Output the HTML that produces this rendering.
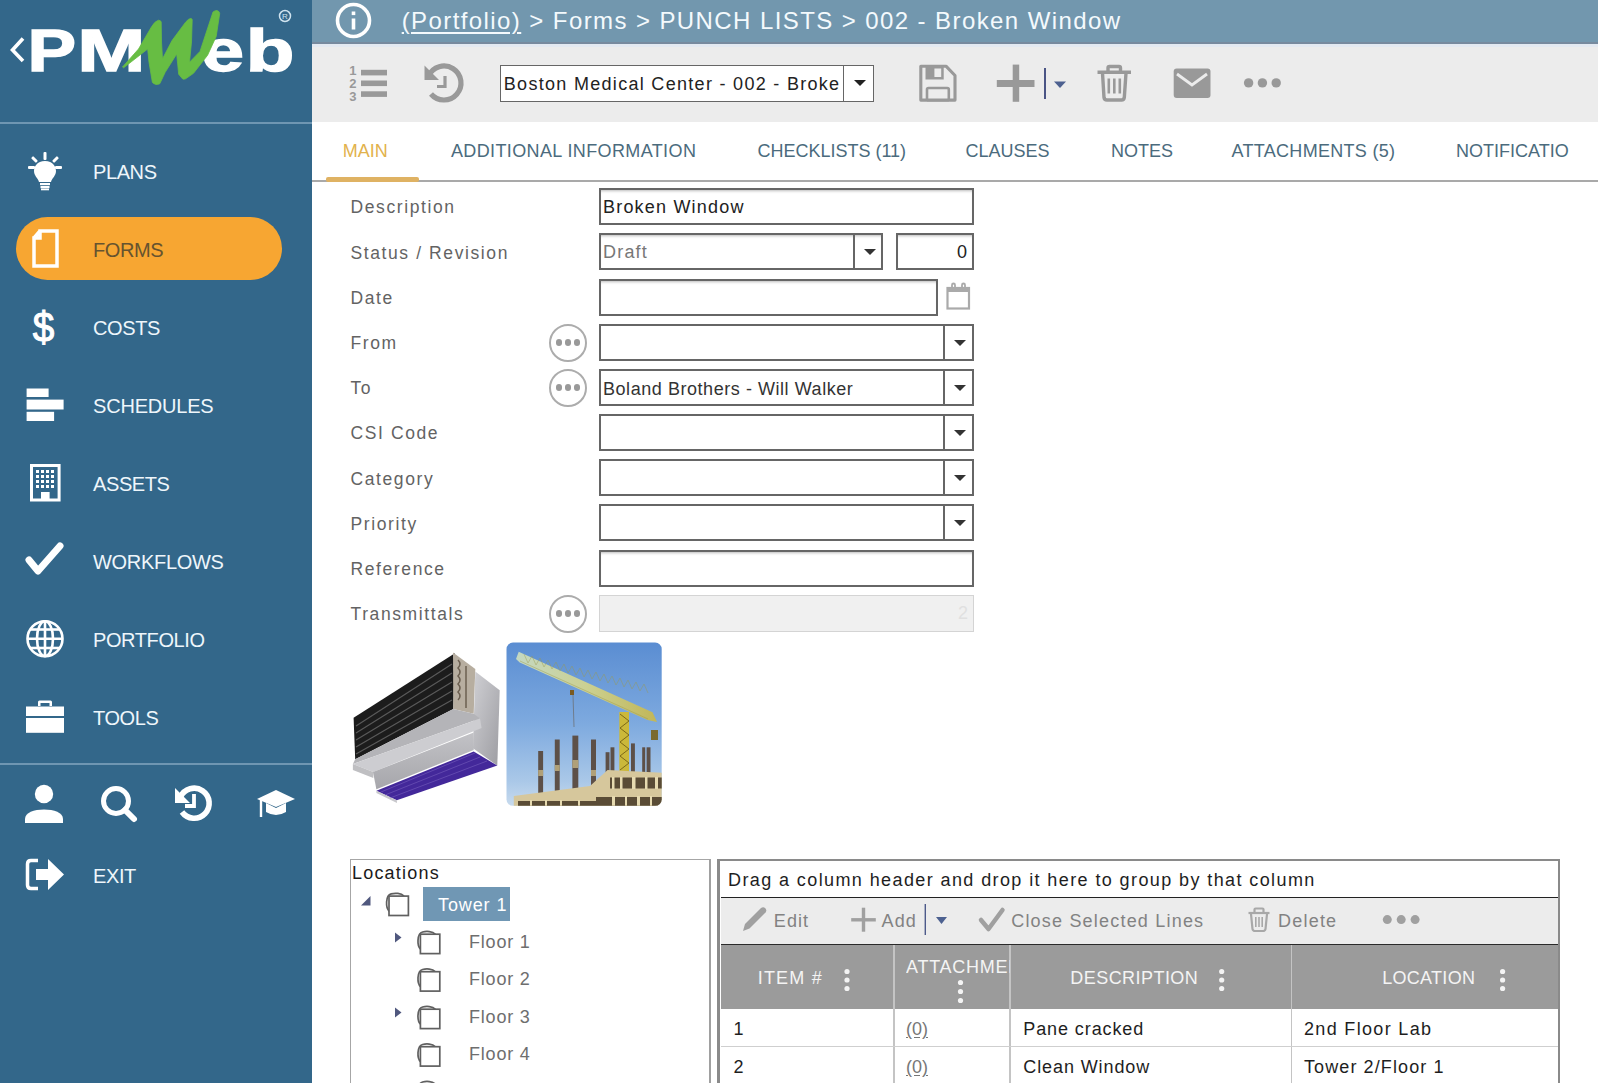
<!DOCTYPE html>
<html><head><meta charset="utf-8">
<style>
*{box-sizing:border-box;margin:0;padding:0}
html,body{width:1598px;height:1083px;overflow:hidden;background:#fff;font-family:"Liberation Sans",sans-serif}
.a{position:absolute}
.t{position:absolute;white-space:pre;line-height:1}
#side{left:0;top:0;width:312px;height:1083px;background:#33678a}
.nav{color:#eef6fb;font-size:20px;left:93px;letter-spacing:-0.4px}
#crumb{left:312px;top:0;width:1286px;height:44px;background:#7297ae;border-bottom:2.2px solid #778a9e}
#tool{left:312px;top:44px;width:1286px;height:78px;background:#ececec;border-top:3px solid #e3e9f1}
.tab{font-size:18px;color:#4b6b7d;top:141.7px}
.lbl{font-size:17.5px;color:#636363;left:350.5px;letter-spacing:1.6px}
.inp{position:absolute;border:2px solid #666;background:#fff;box-shadow:inset 0 3px 3px -2px #bbb}
.itx{font-size:18px;color:#222;letter-spacing:1.2px}
.dd{position:absolute;border-left:2px solid #666;top:0;bottom:0}
.arr{position:absolute;width:0;height:0;border-left:6px solid transparent;border-right:6px solid transparent;border-top:6px solid #333}
.circ{position:absolute;width:38px;height:38px;border:2px solid #acacac;border-radius:50%;background:#fff}
.circ i{position:absolute;top:13.8px;width:6.4px;height:6.4px;border-radius:50%;background:#999}
</style></head><body>
<!-- SIDEBAR -->
<div id="side" class="a"></div>
<svg class="a" style="left:0;top:0" width="312" height="124" viewBox="0 0 312 124">
 <polyline points="23,38.5 12.5,50 23,61" fill="none" stroke="#fff" stroke-width="3.6" stroke-linejoin="miter"/>
 <g font-family="Liberation Sans" font-weight="700" font-size="60" fill="#fff" stroke="#fff" stroke-width="1.4">
 <text x="27.5" y="70.8" textLength="48.6" lengthAdjust="spacingAndGlyphs">P</text>
 <text x="77.2" y="70.8" textLength="68.2" lengthAdjust="spacingAndGlyphs">M</text>
 <text x="201.6" y="70.8" textLength="42.5" lengthAdjust="spacingAndGlyphs">e</text>
 <text x="245.7" y="70.8" textLength="48.6" lengthAdjust="spacingAndGlyphs">b</text>
 </g>
 
 <path d="M122.5,67 L138.5,49 L151.7,26.5 Q155,21 158.5,20.2 Q161,20.5 161.2,22 L161.5,42 L162.5,58.8 L172,40.6 L185.4,22.4 Q188.5,18.6 190.8,18.4 Q192.4,18.8 192.2,20 L191.5,42 L189.5,62.2 L200,51.4 L213,12 Q215,10.4 217,10.5 Q219.8,11.5 219.7,13.6 L216.2,36.4 L207.6,55.2 L193.5,73.3 L185.6,78.8 Q183.5,79.5 182.7,79 L178.7,74.3 L176.7,54 L165.2,72.3 L159.8,83.7 Q157.5,84.8 155.8,84.4 Q153,83.5 152.4,82.4 L149,62.2 L147.7,49 L123.6,67.8 Z" fill="#67bd43" stroke="#67bd43" stroke-width="0.8" stroke-linejoin="round"/>
 <circle cx="285" cy="16" r="5.5" fill="none" stroke="#cfe3ef" stroke-width="1.5"/>
 <text x="285" y="19" font-family="Liberation Sans" font-size="8" fill="#cfe3ef" text-anchor="middle">R</text>
 <rect x="0" y="122" width="312" height="2" fill="#6f96b2"/>
</svg>
<!-- orange pill -->
<div class="a" style="left:15.5px;top:217px;width:266px;height:63px;border-radius:32px;background:#f7a632"></div>
<svg class="a" style="left:0;top:140px" width="80" height="620" viewBox="0 140 80 620">
 <!-- bulb -->
 <g fill="#fff">
  <rect x="43.5" y="152" width="3" height="8" rx="1"/>
  <rect x="28" y="166" width="7" height="3" rx="1"/>
  <rect x="55" y="166" width="7" height="3" rx="1"/>
  <rect x="33" y="156" width="3" height="7" rx="1" transform="rotate(-45 34.5 159.5)"/>
  <rect x="54" y="156" width="3" height="7" rx="1" transform="rotate(45 55.5 159.5)"/>
  <path d="M45,161 C37,161 34,167 34,171 C34,176 38,178 39,182 L51,182 C52,178 56,176 56,171 C56,167 53,161 45,161 Z"/>
  <rect x="40" y="183" width="10" height="2.2"/>
  <rect x="40.5" y="186" width="9" height="2.2"/>
  <rect x="41" y="188.5" width="8" height="1.8"/>
 </g>
 <!-- forms doc -->
 <path d="M40,231 L57,231 L57,266 L34,266 L34,238 L40,238 Z M40,231 L34,238" fill="none" stroke="#fff" stroke-width="3.5" stroke-linejoin="miter"/>
 <!-- schedules -->
 <g fill="#fff">
  <rect x="26.6" y="388.5" width="22" height="8.5"/>
  <rect x="26.6" y="399.6" width="37" height="9.9"/>
  <rect x="26.6" y="411.8" width="27.5" height="9.2"/>
 </g>
 <!-- assets building -->
 <g fill="#fff">
  <path d="M30,464 L60.6,464 L60.6,501.4 L30,501.4 Z M33,467 L33,498.4 L41,498.4 L41,492 L49.6,492 L49.6,498.4 L57.6,498.4 L57.6,467 Z" fill-rule="evenodd"/>
  <g>
   <rect x="36" y="470" width="3" height="3"/><rect x="41" y="470" width="3" height="3"/><rect x="46" y="470" width="3" height="3"/><rect x="51" y="470" width="3" height="3"/>
   <rect x="36" y="475" width="3" height="3"/><rect x="41" y="475" width="3" height="3"/><rect x="46" y="475" width="3" height="3"/><rect x="51" y="475" width="3" height="3"/>
   <rect x="36" y="480" width="3" height="3"/><rect x="41" y="480" width="3" height="3"/><rect x="46" y="480" width="3" height="3"/><rect x="51" y="480" width="3" height="3"/>
   <rect x="36" y="485" width="3" height="3"/><rect x="41" y="485" width="3" height="3"/><rect x="46" y="485" width="3" height="3"/><rect x="51" y="485" width="3" height="3"/>
  </g>
 </g>
 <!-- check -->
 <path d="M29,560 L38,571 L60,546" fill="none" stroke="#fff" stroke-width="7" stroke-linecap="round" stroke-linejoin="round"/>
 <!-- globe -->
 <g fill="none" stroke="#fff" stroke-width="2.6">
  <circle cx="45" cy="638.7" r="17.5"/>
  <ellipse cx="45" cy="638.7" rx="8" ry="17.5"/>
  <line x1="45" y1="621" x2="45" y2="656.5"/>
  <line x1="27.5" y1="638.7" x2="62.5" y2="638.7"/>
  <line x1="30" y1="629.5" x2="60" y2="629.5"/>
  <line x1="30" y1="648" x2="60" y2="648"/>
 </g>
 <!-- briefcase -->
 <g fill="#fff">
  <path d="M38,706 L38,702 Q38,700.5 39.5,700.5 L50.5,700.5 Q52,700.5 52,702 L52,706 L49.5,706 L49.5,703 L40.5,703 L40.5,706 Z"/>
  <rect x="26" y="706.5" width="38" height="9.5"/>
  <rect x="26" y="718" width="38" height="14.8"/>
 </g>
</svg>
<div class="a" style="left:30px;top:300px;width:30px;height:50px;"><svg width="30" height="50" viewBox="0 0 30 50"><text x="13.6" y="42.3" text-anchor="middle" font-family="Liberation Sans" font-weight="400" font-size="43" fill="#fff" stroke="#fff" stroke-width="1.1" transform="translate(13.6 0) scale(0.9 1) translate(-13.6 0)">$</text></svg></div>
<div class="t nav" style="top:161.6px">PLANS</div>
<div class="t nav" style="top:239.6px;color:#66532f">FORMS</div>
<div class="t nav" style="top:317.6px">COSTS</div>
<div class="t nav" style="top:395.6px;letter-spacing:-0.2px">SCHEDULES</div>
<div class="t nav" style="top:473.6px">ASSETS</div>
<div class="t nav" style="top:551.6px;letter-spacing:-0.3px">WORKFLOWS</div>
<div class="t nav" style="top:629.6px">PORTFOLIO</div>
<div class="t nav" style="top:707.6px">TOOLS</div>
<div class="a" style="left:0;top:763px;width:312px;height:2px;background:#6f96b2"></div>
<svg class="a" style="left:0;top:770px" width="312" height="130" viewBox="0 770 312 130">
 <g fill="#fff">
  <!-- person -->
  <circle cx="44" cy="794" r="9.2"/>
  <path d="M25,823 L25,819 C25,812.5 34,809.5 44,809.5 C54,809.5 63,812.5 63,819 L63,823 Z"/>
 </g>
 <!-- search -->
 <circle cx="116" cy="801" r="12.5" fill="none" stroke="#fff" stroke-width="5"/>
 <line x1="125" y1="810" x2="134" y2="819" stroke="#fff" stroke-width="6" stroke-linecap="round"/>
 <!-- history -->
 <path d="M180.5,797 A15,15 0 1 1 182,812" fill="none" stroke="#fff" stroke-width="5.6"/>
 <path d="M175,788 L175,803 L190,803 Z" fill="#fff"/>
 <path d="M194,794 L194,806 L185,806" fill="none" stroke="#fff" stroke-width="3.8"/>
 <!-- grad cap -->
 <path d="M276,790 L295,799 L276,807 L257,799 Z" fill="#fff"/>
 <path d="M266,803 L266,812 Q276,818 286,812 L286,803 L276,808 Z" fill="#fff"/>
 <line x1="261" y1="800" x2="261" y2="817" stroke="#fff" stroke-width="2.4"/>
 <!-- exit -->
 <path d="M38,860.5 L31,860.5 Q27.5,860.5 27.5,864 L27.5,885 Q27.5,888.5 31,888.5 L38,888.5" fill="none" stroke="#fff" stroke-width="3.5"/>
 <path d="M36,869 L48,869 L48,859 L64,874.5 L48,890 L48,880 L36,880 Z" fill="#fff"/>
</svg>
<div class="t nav" style="top:865.5px">EXIT</div>


<!-- TOP BAR -->
<div id="crumb" class="a"></div>
<div id="tool" class="a"></div>
<svg class="a" style="left:312px;top:0" width="1286" height="122" viewBox="312 0 1286 122">
 <!-- info -->
 <circle cx="353.5" cy="20.5" r="16" fill="none" stroke="#fff" stroke-width="3.6"/>
 <rect x="351.7" y="18.5" width="3.6" height="11" fill="#fff"/>
 <rect x="351.7" y="11.5" width="3.6" height="3.6" fill="#fff"/>
 <!-- numbered list -->
 <g fill="#999">
  <rect x="361" y="69.8" width="26" height="5.6"/>
  <rect x="361" y="80.5" width="26" height="5.6"/>
  <rect x="361" y="91.3" width="26" height="5.6"/>
 </g>
 <g fill="#999" font-family="Liberation Sans" font-weight="700" font-size="13">
  <text x="349.3" y="75">1</text><text x="349.3" y="88">2</text><text x="349.3" y="101.3">3</text>
 </g>
 <!-- history -->
 <path d="M428.5,76 A17,17 0 1 1 431,94" fill="none" stroke="#999" stroke-width="5.2"/>
 <path d="M424.5,65.5 L424.5,80 L439,80 Z" fill="#999"/>
 <path d="M445,76 L445,86.5 L437,86.5" fill="none" stroke="#999" stroke-width="3.2"/>
 <!-- save -->
 <path d="M920.8,66.2 L946,66.2 L955,75.5 L955,100.1 L920.8,100.1 Z" fill="none" stroke="#999" stroke-width="3.1" stroke-linejoin="round"/>
 <path d="M925.5,65.5 H943.7 V79.5 H925.5 Z M934.4,68.5 H941.2 V77 H934.4 Z" fill="#999" fill-rule="evenodd"/>
 <rect x="927" y="88" width="21.8" height="12.2" rx="1.5" fill="none" stroke="#999" stroke-width="2.6"/>
 <!-- plus -->
 <rect x="1012.7" y="64.6" width="6.5" height="37.2" fill="#999"/>
 <rect x="996.8" y="80" width="37.7" height="7" fill="#999"/>
 <rect x="1044" y="68" width="2" height="31" fill="#4a5485"/>
 <path d="M1054,81.5 L1066,81.5 L1060,88 Z" fill="#4d6190"/>
 <!-- trash -->
 <g fill="none" stroke="#999" stroke-width="3.4">
  <path d="M1102.5,73 L1104,97.5 Q1104.3,100 1107,100 L1121.5,100 Q1124,100 1124.3,97.5 L1126,73"/>
  <path d="M1097.5,72.3 L1131,72.3"/>
  <path d="M1108,72 L1108,68 Q1108,66.5 1109.5,66.5 L1119,66.5 Q1120.5,66.5 1120.5,68 L1120.5,72"/>
 </g>
 <g fill="#999"><rect x="1107.5" y="78.5" width="2.6" height="15"/><rect x="1113" y="78.5" width="2.6" height="15"/><rect x="1118.5" y="78.5" width="2.6" height="15"/></g>
 <!-- mail -->
 <rect x="1173.7" y="68.4" width="36.8" height="29.6" rx="3" fill="#999"/>
 <path d="M1177,74 L1192,85 L1207,74" fill="none" stroke="#ececec" stroke-width="2.8"/>
 <!-- dots -->
 <g fill="#999"><circle cx="1248.6" cy="82.9" r="4.7"/><circle cx="1262.4" cy="82.9" r="4.7"/><circle cx="1276.2" cy="82.9" r="4.7"/></g>
</svg>
<div class="t" style="left:401.7px;top:9.2px;font-size:24px;color:#f4fafd;letter-spacing:1.41px"><span style="text-decoration:underline;text-underline-offset:3px;text-decoration-thickness:1.5px">(Portfolio)</span> &gt; Forms &gt; PUNCH LISTS &gt; 002 - Broken Window</div>
<div class="inp" style="left:500px;top:65px;width:373.5px;height:36.5px;border-width:1.6px;box-shadow:none">
 <div class="dd" style="left:342px;border-left-width:1.6px"></div>
 <div class="arr" style="left:353px;top:14px;border-top-color:#222"></div>
</div>
<div class="t itx" style="left:503.8px;top:74.8px;letter-spacing:1.3px">Boston Medical Center - 002 - Broke</div>


<!-- TABS -->
<div class="a" style="left:312px;top:179.5px;width:1286px;height:2px;background:#a9a9a9"></div>
<div class="a" style="left:326px;top:176.5px;width:93px;height:5px;background:#dfb263;border-radius:2px"></div>
<div class="t tab" style="left:342.7px;color:#e2b24c">MAIN</div>
<div class="t tab" style="left:450.9px;letter-spacing:0.38px">ADDITIONAL INFORMATION</div>
<div class="t tab" style="left:757.4px">CHECKLISTS (11)</div>
<div class="t tab" style="left:965.5px">CLAUSES</div>
<div class="t tab" style="left:1110.9px">NOTES</div>
<div class="t tab" style="left:1231.5px;letter-spacing:0.3px">ATTACHMENTS (5)</div>
<div class="t tab" style="left:1456px">NOTIFICATIO</div>


<!-- FORM -->
<div class="t lbl" style="top:199.3px">Description</div>
<div class="t lbl" style="top:244.5px">Status / Revision</div>
<div class="t lbl" style="top:289.7px">Date</div>
<div class="t lbl" style="top:334.9px">From</div>
<div class="t lbl" style="top:380.1px">To</div>
<div class="t lbl" style="top:425.3px">CSI Code</div>
<div class="t lbl" style="top:470.5px">Category</div>
<div class="t lbl" style="top:515.7px">Priority</div>
<div class="t lbl" style="top:560.9px">Reference</div>
<div class="t lbl" style="top:606.1px">Transmittals</div>

<div class="inp" style="left:599px;top:188px;width:375px;height:37px"></div>
<div class="t itx" style="left:603px;top:197.8px">Broken Window</div>

<div class="inp" style="left:599px;top:233px;width:284px;height:37px"><div class="dd" style="left:252px"></div><div class="arr" style="left:263px;top:14px"></div></div>
<div class="t itx" style="left:603px;top:242.8px;color:#777">Draft</div>
<div class="inp" style="left:896px;top:233px;width:78px;height:37px"></div>
<div class="t itx" style="left:957px;top:242.8px">0</div>

<div class="inp" style="left:599px;top:278.5px;width:339px;height:37px"></div>
<svg class="a" style="left:945px;top:282px" width="28" height="30" viewBox="945 282 28 30">
 <rect x="947.5" y="288" width="21.5" height="20.5" fill="none" stroke="#aaa" stroke-width="2.2"/>
 <rect x="947.5" y="288" width="21.5" height="4" fill="#aaa"/>
 <path d="M952,290 L952,285 Q952,283.5 953.5,283.5 Q955,283.5 955,285 L955,290 M962,290 L962,285 Q962,283.5 963.5,283.5 Q965,283.5 965,285 L965,290" fill="none" stroke="#aaa" stroke-width="1.8"/>
</svg>

<div class="circ" style="left:549px;top:323.5px"><i style="left:4.6px"></i><i style="left:13.9px"></i><i style="left:23.1px"></i></div>
<div class="inp" style="left:599px;top:323.5px;width:375px;height:37px;box-shadow:none"><div class="dd" style="left:342px"></div><div class="arr" style="left:353px;top:14px"></div></div>

<div class="circ" style="left:549px;top:368.5px"><i style="left:4.6px"></i><i style="left:13.9px"></i><i style="left:23.1px"></i></div>
<div class="inp" style="left:599px;top:368.5px;width:375px;height:37px;box-shadow:none"><div class="dd" style="left:342px"></div><div class="arr" style="left:353px;top:14px"></div></div>
<div class="t itx" style="left:603px;top:379.8px;color:#333;letter-spacing:0.55px">Boland Brothers - Will Walker</div>

<div class="inp" style="left:599px;top:414px;width:375px;height:37px;box-shadow:none"><div class="dd" style="left:342px"></div><div class="arr" style="left:353px;top:14px"></div></div>
<div class="inp" style="left:599px;top:459px;width:375px;height:37px;box-shadow:none"><div class="dd" style="left:342px"></div><div class="arr" style="left:353px;top:14px"></div></div>
<div class="inp" style="left:599px;top:504px;width:375px;height:37px;box-shadow:none"><div class="dd" style="left:342px"></div><div class="arr" style="left:353px;top:14px"></div></div>
<div class="inp" style="left:599px;top:549.5px;width:375px;height:37px"></div>

<div class="circ" style="left:549px;top:594.5px"><i style="left:4.6px"></i><i style="left:13.9px"></i><i style="left:23.1px"></i></div>
<div class="a" style="left:599px;top:595px;width:375px;height:37px;background:#f0f0f0;border:1.5px solid #d4d4d4"></div>
<div class="t itx" style="left:958px;top:604px;color:#e0e0e0">2</div>


<!-- IMAGES -->
<svg class="a" style="left:345px;top:640px" width="160" height="170" viewBox="345 640 160 170">
 <defs>
  <linearGradient id="met" x1="0" y1="0" x2="1" y2="1"><stop offset="0" stop-color="#d0d0d4"/><stop offset="1" stop-color="#9d9da2"/></linearGradient>
  <linearGradient id="met2" x1="0" y1="0" x2="0" y2="1"><stop offset="0" stop-color="#c2c2c6"/><stop offset="1" stop-color="#a6a6ab"/></linearGradient>
 </defs>
 <polygon points="353.6,717.7 454.9,653.3 453.3,709.1 355.2,759.3" fill="#1c1c1c"/>
 <g stroke="#5a5a5a" stroke-width="1.2">
  <line x1="356" y1="726" x2="452" y2="664"/>
  <line x1="356" y1="733" x2="452" y2="673"/>
  <line x1="356" y1="740" x2="452" y2="682"/>
  <line x1="356" y1="747" x2="452" y2="691"/>
  <line x1="356" y1="754" x2="452" y2="700"/>
 </g>
 <polygon points="453,652.6 475.3,669 473.7,713.8 453.3,709" fill="#b7aea0"/>
 <g stroke="#6b5f50" stroke-width="1.5" fill="none"><path d="M458,660 q4,4 0,8 q4,4 0,8 q4,4 0,8 q4,4 0,8 q4,4 0,8"/><path d="M466,666 L466,708"/></g>
 <polygon points="475.3,671.4 499.7,690.2 497.3,765.6 473,748.3" fill="url(#met)"/>
 <polygon points="355.2,759.3 453.3,709.1 473.7,713.8 480,718.5 352.9,764" fill="#b4b4b8"/>
 <polygon points="352.9,764 480,718.5 481.6,728 373.3,771.9" fill="#cdcdd1"/>
 <polygon points="352.9,764 373.3,771.9 373.3,778 352.9,770" fill="#bfbfc2"/>
 <polygon points="373,772 473.7,732.6 473.7,750 376.4,789.2" fill="url(#met2)"/>
 <polygon points="376.4,790.7 473.7,751.5 497.3,765.6 396.8,800.2" fill="#43289a"/>
 <polygon points="376.4,790.7 396.8,800.2 397,803 376.4,793" fill="#c8c8cc"/>
 <g stroke="#7a62c0" stroke-width="0.8" opacity="0.7">
  <line x1="385" y1="795" x2="480" y2="757"/><line x1="390" y1="798" x2="487" y2="761"/><line x1="381" y1="792" x2="475" y2="753"/>
 </g>
</svg>
<svg class="a" style="left:506px;top:642px" width="156" height="164" viewBox="506 642 156 164">
 <defs>
  <linearGradient id="sky" x1="0" y1="0" x2="0" y2="1"><stop offset="0" stop-color="#5a8dd2"/><stop offset="0.5" stop-color="#7eaadf"/><stop offset="0.85" stop-color="#aac8e8"/><stop offset="1" stop-color="#c8dbee"/></linearGradient>
  <linearGradient id="jib" x1="0" y1="0" x2="1" y2="0"><stop offset="0" stop-color="#cfe0c0"/><stop offset="0.5" stop-color="#d6d68a"/><stop offset="1" stop-color="#c9b848"/></linearGradient>
  <clipPath id="cr"><rect x="506.5" y="642.5" width="155.2" height="163.3" rx="6.5"/></clipPath>
 </defs>
 <g clip-path="url(#cr)">
  <rect x="506" y="642" width="156" height="164" fill="url(#sky)"/>
  <polygon points="518.7,651.8 652.5,712.3 657,722 647.6,720 519.7,662.5 516,659" fill="url(#jib)" opacity="0.9"/>
  <g stroke="#9a9a50" stroke-width="0.8" fill="none" opacity="0.55">
   <path d="M520,661 L648,719"/>
   <path d="M524,654 l4,9 l4,-7 l4,9 l4,-7 l4,9 l4,-7 l4,9 l4,-7 l4,9 l4,-7 l4,9 l4,-7 l4,9 l4,-7 l4,9 l4,-7 l4,9 l4,-7 l4,9 l4,-7 l4,9 l4,-7 l4,9 l4,-7 l4,9 l4,-7 l4,9 l4,-7 l4,9 l4,-7 l4,9"/>
  </g>
    <rect x="570" y="690" width="4" height="5" fill="#7a5a20"/>
  <line x1="573" y1="695" x2="574" y2="727" stroke="#6a6a6a" stroke-width="0.7"/>
  <rect x="619.3" y="712" width="9.7" height="60" fill="#cbb83a"/>
  <g stroke="#7d6a18" stroke-width="1"><path d="M620,714 l9,7 M629,721 l-9,7 M620,728 l9,7 M629,735 l-9,7 M620,742 l9,7 M629,749 l-9,7 M620,756 l9,7 M629,763 l-9,7"/></g>
  <rect x="651" y="730" width="7" height="10" fill="#7a6a30"/>
  <g fill="#5d5048">
   <rect x="538.2" y="751" width="4.9" height="47"/>
   <rect x="554.8" y="739.5" width="4.9" height="55"/>
   <rect x="572.4" y="735.6" width="5.9" height="56"/>
   <rect x="591" y="739.5" width="5" height="49"/>
   <rect x="605.6" y="752.2" width="3.9" height="27"/>
   <rect x="610.5" y="747.3" width="3.9" height="30"/>
   <rect x="631" y="743.4" width="3.9" height="30"/>
   <rect x="642.2" y="747.3" width="3" height="26"/>
   <rect x="646.6" y="747.3" width="3.9" height="26"/>
  </g>
  <g fill="#b0a078"><rect x="538.2" y="770" width="4.9" height="6"/><rect x="554.8" y="765" width="4.9" height="6"/><rect x="572.4" y="760" width="5.9" height="8"/><rect x="591" y="770" width="5" height="6"/></g>
  <polygon points="513.8,796 590,786 607.6,770 662,772.7 662,806 513.8,806" fill="#d6c79c"/>
  <g fill="#5a4c36">
   <rect x="610" y="777.5" width="52" height="11"/>
   <rect x="596" y="797" width="66" height="9"/>
   <rect x="518" y="801" width="78" height="5"/>
  </g>
  <g fill="#e6dab0">
   <rect x="620" y="777" width="2.5" height="12"/><rect x="632" y="777" width="3.5" height="12"/><rect x="645" y="777" width="2.5" height="12"/><rect x="655" y="777" width="3" height="12"/><rect x="612" y="777" width="2.5" height="12"/>
   <rect x="637" y="796" width="3" height="10"/><rect x="612" y="796" width="3" height="10"/><rect x="625" y="796" width="2" height="10"/><rect x="650" y="796" width="2" height="10"/>
   <rect x="530" y="800" width="2" height="6"/><rect x="545" y="800" width="2" height="6"/><rect x="560" y="800" width="2" height="6"/><rect x="578" y="800" width="2" height="6"/>
  </g>
 </g>
</svg>

<!-- BOTTOM: LOCATIONS -->
<div class="a" style="left:350px;top:858.5px;width:361px;height:240px;border:1.5px solid #a6a6a6;border-right:2px solid #a0a0a0"></div>
<div class="a" style="left:711px;top:858.5px;width:8px;height:240px;border-right:2px solid #8a8a8a"></div>
<div class="t" style="left:352px;top:864px;font-size:18px;color:#1a1a1a;letter-spacing:1.2px">Locations</div>
<div class="a" style="left:423px;top:887px;width:86.5px;height:33.5px;background:#7097b4"></div>
<div class="t" style="left:438px;top:895.6px;font-size:18px;color:#fff;letter-spacing:0.9px">Tower 1</div>
<svg class="a" style="left:350px;top:880px" width="200" height="203" viewBox="350 880 200 203">
 <path d="M370.5,896 L370.5,905.5 L361,905.5 Z" fill="#50587e"/>
 <path d="M395,932.5 L401.5,937.5 L395,942.5 Z" fill="#50587e"/>
 <path d="M395,1007.5 L401.5,1012.5 L395,1017.5 Z" fill="#50587e"/>
 <g stroke="#606060" stroke-width="1.7" fill="none">
  <path d="M389.3,911.3000000000001 C385.4,907.6 385.4,895.6 391.2,893.9 C395,892.8000000000001 401,893.0 404,896.2" fill="none"/><rect x="389" y="896.1" width="19.4" height="19.4" fill="#fff"/>
  <path d="M420.7,949.4000000000001 C416.79999999999995,945.7 416.79999999999995,933.7 422.59999999999997,932.0 C426.4,930.9000000000001 432.4,931.1 435.4,934.3000000000001" fill="none"/><rect x="420.4" y="934.2" width="19.4" height="19.4" fill="#fff"/>
  <path d="M420.7,986.9000000000001 C416.79999999999995,983.2 416.79999999999995,971.2 422.59999999999997,969.5 C426.4,968.4000000000001 432.4,968.6 435.4,971.8000000000001" fill="none"/><rect x="420.4" y="971.7" width="19.4" height="19.4" fill="#fff"/>
  <path d="M420.7,1024.4 C416.79999999999995,1020.7 416.79999999999995,1008.7 422.59999999999997,1007.0 C426.4,1005.9000000000001 432.4,1006.1 435.4,1009.3000000000001" fill="none"/><rect x="420.4" y="1009.2" width="19.4" height="19.4" fill="#fff"/>
  <path d="M420.7,1061.9 C416.79999999999995,1058.2 416.79999999999995,1046.2 422.59999999999997,1044.5 C426.4,1043.4 432.4,1043.6000000000001 435.4,1046.8" fill="none"/><rect x="420.4" y="1046.7" width="19.4" height="19.4" fill="#fff"/>
  <path d="M420.7,1099.4 C416.79999999999995,1095.7 416.79999999999995,1083.7 422.59999999999997,1082.0 C426.4,1080.9 432.4,1081.1000000000001 435.4,1084.3" fill="none"/><rect x="420.4" y="1084.2" width="19.4" height="19.4" fill="#fff"/>
 </g>
</svg>
<div class="t" style="left:469px;top:932.8px;font-size:18px;color:#6e6e6e;letter-spacing:0.8px">Floor 1</div>
<div class="t" style="left:469px;top:970.3px;font-size:18px;color:#6e6e6e;letter-spacing:0.8px">Floor 2</div>
<div class="t" style="left:469px;top:1007.8px;font-size:18px;color:#6e6e6e;letter-spacing:0.8px">Floor 3</div>
<div class="t" style="left:469px;top:1045.3px;font-size:18px;color:#6e6e6e;letter-spacing:0.8px">Floor 4</div>

<!-- GRID -->
<div class="a" style="left:718px;top:859px;width:842px;height:240px;border:2.5px solid #8a8a8a;border-bottom:none"></div>
<div class="t" style="left:728px;top:871.4px;font-size:18px;color:#1e1e1e;letter-spacing:1.4px">Drag a column header and drop it here to group by that column</div>
<div class="a" style="left:720.5px;top:897px;width:837px;height:48px;background:#ececec;border-top:1.6px solid #222;border-bottom:1.8px solid #2a2a2a"></div>
<svg class="a" style="left:720px;top:897px" width="838" height="48" viewBox="720 897 838 48">
 <path d="M743,931 L745,924 L761,908 Q763.5,906.5 765.5,908.5 Q767,910.5 765.5,912.5 L749.5,928.5 Z" fill="#a0a0a0"/>
 <rect x="861.8" y="907.7" width="3.4" height="24" fill="#a0a0a0"/>
 <rect x="851.2" y="918.1" width="24.6" height="3.4" fill="#a0a0a0"/>
 <rect x="924.6" y="904" width="1.4" height="31" fill="#4d5a8a"/>
 <path d="M936,917 L947,917 L941.5,924 Z" fill="#4d6190"/>
 <path d="M981,920 L988.5,929 L1002.5,910" fill="none" stroke="#a0a0a0" stroke-width="4.5" stroke-linecap="round" stroke-linejoin="round"/>
 <g fill="none" stroke="#a8a8a8" stroke-width="2.2">
  <path d="M1251,914 L1252.5,929 Q1253,931 1255,931 L1263,931 Q1265,931 1265.5,929 L1267,914"/>
  <path d="M1248.5,913 L1269.5,913"/>
  <path d="M1254.5,912.5 L1254.5,909.5 Q1254.5,908.5 1255.5,908.5 L1262.5,908.5 Q1263.5,908.5 1263.5,909.5 L1263.5,912.5"/>
 </g>
 <g fill="#a8a8a8"><rect x="1255" y="917" width="1.6" height="10"/><rect x="1258.2" y="917" width="1.6" height="10"/><rect x="1261.4" y="917" width="1.6" height="10"/></g>
 <g fill="#a0a0a0"><circle cx="1387.3" cy="919.6" r="4.5"/><circle cx="1401.2" cy="919.6" r="4.5"/><circle cx="1415.1" cy="919.6" r="4.5"/></g>
</svg>
<div class="t" style="left:773.8px;top:911.6px;font-size:18px;color:#828282;letter-spacing:1.1px">Edit</div>
<div class="t" style="left:881.6px;top:911.6px;font-size:18px;color:#828282;letter-spacing:1.1px">Add</div>
<div class="t" style="left:1011.2px;top:911.6px;font-size:18px;color:#828282;letter-spacing:1.2px">Close Selected Lines</div>
<div class="t" style="left:1278.1px;top:911.6px;font-size:18px;color:#828282;letter-spacing:1.2px">Delete</div>

<div class="a" style="left:720.5px;top:945px;width:837px;height:64px;background:#9b9b9b"></div>
<div class="a" style="left:893px;top:945px;width:1.5px;height:138px;background:#c4c4c4"></div>
<div class="a" style="left:1009px;top:945px;width:1.5px;height:138px;background:#c4c4c4"></div>
<div class="a" style="left:1290.5px;top:945px;width:1.5px;height:138px;background:#c4c4c4"></div>
<div class="a" style="left:720.5px;top:1045.5px;width:837px;height:1.5px;background:#cfcfcf"></div>
<div class="t" style="left:757.7px;top:968.6px;font-size:18px;color:#f4f4f4;letter-spacing:1.2px">ITEM #</div>
<div class="t" style="left:906px;top:957.8px;font-size:18px;color:#f4f4f4;letter-spacing:0.75px;width:103.5px;overflow:hidden">ATTACHMENTS</div>
<div class="t" style="left:1070.3px;top:968.6px;font-size:18px;color:#f4f4f4;letter-spacing:0.45px">DESCRIPTION</div>
<div class="t" style="left:1382.2px;top:968.6px;font-size:18px;color:#f4f4f4;letter-spacing:0.3px">LOCATION</div>
<svg class="a" style="left:720px;top:945px" width="838" height="64" viewBox="720 945 838 64">
 <g fill="#f4f4f4">
  <circle cx="847" cy="971.5" r="2.6"/><circle cx="847" cy="980" r="2.6"/><circle cx="847" cy="988.5" r="2.6"/>
  <circle cx="960.5" cy="982.5" r="2.6"/><circle cx="960.5" cy="991.5" r="2.6"/><circle cx="960.5" cy="1000.5" r="2.6"/>
  <circle cx="1221.7" cy="971.5" r="2.6"/><circle cx="1221.7" cy="980" r="2.6"/><circle cx="1221.7" cy="988.5" r="2.6"/>
  <circle cx="1502.6" cy="971.5" r="2.6"/><circle cx="1502.6" cy="980" r="2.6"/><circle cx="1502.6" cy="988.5" r="2.6"/>
 </g>
</svg>
<div class="t" style="left:733.5px;top:1020.3px;font-size:18px;color:#1e1e1e">1</div>
<div class="t" style="left:733.5px;top:1058.3px;font-size:18px;color:#1e1e1e">2</div>
<div class="t" style="left:906px;top:1020.3px;font-size:18px;color:#777;text-decoration:underline;text-underline-offset:2px">(0)</div>
<div class="t" style="left:906px;top:1058.3px;font-size:18px;color:#777;text-decoration:underline;text-underline-offset:2px">(0)</div>
<div class="t" style="left:1023.3px;top:1020.3px;font-size:18px;color:#1e1e1e;letter-spacing:0.9px">Pane cracked</div>
<div class="t" style="left:1023.3px;top:1058.3px;font-size:18px;color:#1e1e1e;letter-spacing:0.9px">Clean Window</div>
<div class="t" style="left:1304px;top:1020.3px;font-size:18px;color:#1e1e1e;letter-spacing:1.33px">2nd Floor Lab</div>
<div class="t" style="left:1304px;top:1058.3px;font-size:18px;color:#1e1e1e;letter-spacing:1.1px">Tower 2/Floor 1</div>

</body></html>
